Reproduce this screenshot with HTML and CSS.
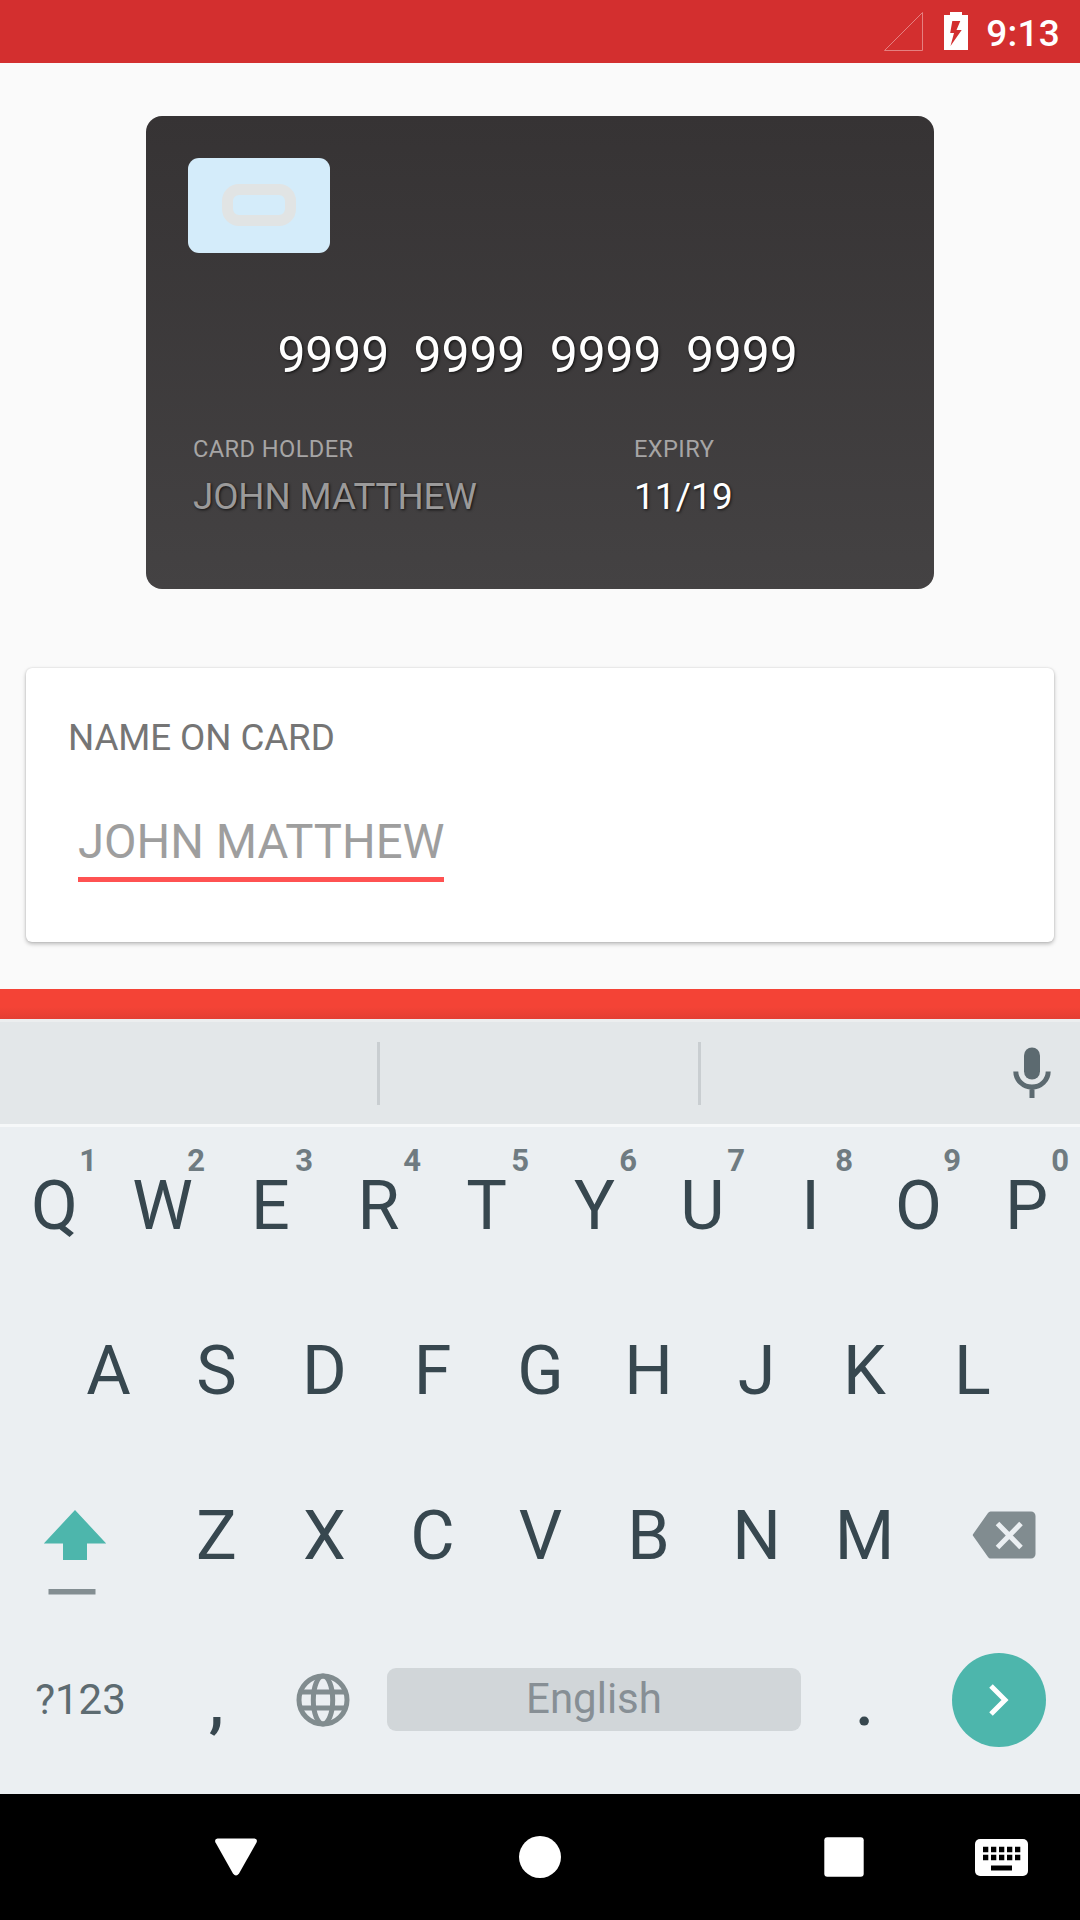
FILE: index.html
```html
<!DOCTYPE html>
<html lang="en">
<head>
<meta charset="utf-8">
<title>Card details</title>
<link rel="stylesheet" href="styles.css">
</head>
<body>
<header class="status-bar">
  <svg class="signal" width="40" height="40" viewBox="0 0 40 40"><path d="M1.500 38.500H39.500V0.500Z" fill="none" stroke="#e58080" stroke-width="1"/></svg>
  <svg class="battery" width="24" height="38" viewBox="0 0 24 38"><path fill="#fff" fill-rule="evenodd" d="M6 0H18V3H24V38H0V3H6ZM8.300 9L6.200 21H10L6.500 34L17.700 18H12.500L16.300 9Z"/></svg>
  <span class="clock">9:13</span>
</header>

<main class="content">
  <section class="bank-card">
    <div class="chip"><div class="chip-ring"></div></div>
    <div class="number">9999  9999  9999  9999</div>
    <div class="details">
      <div class="holder">
        <div class="label">CARD HOLDER</div>
        <div class="value value-hint">JOHN MATTHEW</div>
      </div>
      <div class="expiry">
        <div class="label">EXPIRY</div>
        <div class="value value-date">11/19</div>
      </div>
    </div>
  </section>

  <section class="form-card">
    <div class="field-label">NAME ON CARD</div>
    <div class="field">JOHN MATTHEW</div>
  </section>
</main>

<div class="action-bar"></div>

<section class="keyboard">
  <div class="suggestions">
    <span class="divider"></span>
    <span class="divider divider-second"></span>
    <svg class="mic" width="38" height="52" viewBox="0 0 38 52"><rect x="11" y="0.500" width="16" height="32" rx="8" fill="#5c6a70"/><path d="M2.800 24.500A16.200 15.500 0 0 0 35.200 24.500M19 40.500V51" fill="none" stroke="#5c6a70" stroke-width="5"/></svg>
  </div>
  <div class="keys">
    <div class="row row-first">
      <span class="key">Q<sup class="hint">1</sup></span>
      <span class="key">W<sup class="hint">2</sup></span>
      <span class="key">E<sup class="hint">3</sup></span>
      <span class="key">R<sup class="hint">4</sup></span>
      <span class="key">T<sup class="hint">5</sup></span>
      <span class="key">Y<sup class="hint">6</sup></span>
      <span class="key">U<sup class="hint">7</sup></span>
      <span class="key">I<sup class="hint">8</sup></span>
      <span class="key">O<sup class="hint">9</sup></span>
      <span class="key">P<sup class="hint">0</sup></span>
    </div>
    <div class="row">
      <span class="key">A</span><span class="key">S</span><span class="key">D</span><span class="key">F</span><span class="key">G</span><span class="key">H</span><span class="key">J</span><span class="key">K</span><span class="key">L</span>
    </div>
    <div class="row">
      <span class="key key-shift"><svg width="64" height="86" viewBox="0 0 64 86"><path d="M32 1L63.200 34.500H44V51H20V34.500H0.800Z" fill="#4db6ac"/><path d="M5.500 80H52.500V85.500H5.500Z" fill="#838e92"/></svg></span>
      <span class="key">Z</span><span class="key">X</span><span class="key">C</span><span class="key">V</span><span class="key">B</span><span class="key">N</span><span class="key">M</span>
      <span class="key key-delete"><svg width="64" height="48" viewBox="0 0 64 48"><path d="M18.500 0.500H59A4.500 4.500 0 0 1 63.500 5V43A4.500 4.500 0 0 1 59 47.500H18.500Q17 47.500 16 46L1 24.800Q0.500 24 1 23.200L16 2Q17 0.500 18.500 0.500Z" fill="#818c90"/><path d="M25.500 12.500L49 36.500M49 12.500L25.500 36.500" stroke="#ebeff2" stroke-width="5"/></svg></span>
    </div>
    <div class="row row-last">
      <span class="key key-symbols">?123</span>
      <span class="key key-comma">,</span>
      <span class="key key-language"><svg width="54" height="54" viewBox="0 0 54 54" fill="none" stroke="#818c8f" stroke-width="5"><circle cx="27" cy="27" r="24"/><ellipse cx="27" cy="27" rx="9.700" ry="24"/><path d="M5 19H49M5 35H49"/></svg></span>
      <span class="space">English</span>
      <span class="key key-period">.</span>
      <span class="key key-next"><svg width="20" height="32" viewBox="0 0 20 32"><path d="M2 2L16 16L2 30" fill="none" stroke="#fff" stroke-width="5"/></svg></span>
    </div>
  </div>
</section>

<nav class="nav-bar">
  <span class="nav-item"><svg width="42" height="38" viewBox="0 0 42 38"><path d="M2.500 0.500H39.500Q43 1 41.500 4.500L24 35.500Q21 39.500 18 35.500L0.500 4.500Q-1 1 2.500 0.500Z" fill="#fff"/></svg></span>
  <span class="nav-item"><svg width="42" height="42" viewBox="0 0 42 42"><circle cx="21" cy="21" r="21" fill="#fff"/></svg></span>
  <span class="nav-item"><svg width="40" height="40" viewBox="0 0 40 40"><rect x="0.300" y="0.300" width="39.400" height="39.400" rx="3" fill="#fff"/></svg></span>
  <span class="nav-item"><svg width="53" height="37" viewBox="0 0 53 37"><rect width="53" height="37" rx="5" fill="#fff"/><path d="M8 10.500H45.500M8 18.500H45.500" stroke="#000" stroke-width="5.300" stroke-dasharray="5.300 2.700"/><path d="M16 26.500H37V31.500H16Z"/></svg></span>
</nav>
</body>
</html>
```
FILE: styles.css
```css
* { box-sizing: border-box; }

body {
  margin: 0;
  width: 1080px;
  height: 1920px;
  display: flex;
  flex-direction: column;
  overflow: hidden;
  background: #fafafa;
  font-family: Roboto, "Liberation Sans", sans-serif;
}

svg { display: block; flex: none; }

/* Status bar */
.status-bar {
  height: 63px;
  display: flex;
  align-items: flex-start;
  justify-content: flex-end;
  padding-right: 20px;
  background: #d32f2f;
  color: #fff;
}
.signal { margin: 12px 21px 0 0; }
.battery { margin: 12px 18px 0 0; }
.clock {
  font-size: 37px;
  font-weight: 500;
  line-height: 67px;
  letter-spacing: 0.2px;
}

/* Page content */
.content {
  height: 926px;
  padding: 53px 26px 0;
  display: flex;
  flex-direction: column;
  align-items: center;
}
.bank-card {
  width: 788px;
  height: 473px;
  padding: 42px;
  border-radius: 16px;
  background: linear-gradient(#363334, #444243);
  color: #fff;
}
.chip {
  width: 142px;
  height: 95px;
  padding: 26px 34px;
  border-radius: 11px;
  background: #d4ecfa;
}
.chip-ring {
  width: 74px;
  height: 42px;
  border: 11px solid #e1e4e4;
  border-radius: 17px;
}
.number {
  margin-top: 72.5px;
  padding-right: 5px;
  font-size: 49.875px;
  line-height: 58px;
  letter-spacing: -0.11px;
  white-space: pre;
  text-align: center;
  text-shadow: 1px 1px 3px rgba(0, 0, 0, 0.75);
}
.details {
  display: flex;
  margin: 51.5px 0 0 5px;
}
.holder { width: 441px; }
.label {
  font-size: 23.625px;
  line-height: 28px;
  letter-spacing: 0.42px;
  color: #a6a5a5;
}
.value {
  margin-top: 12.2px;
  font-size: 36.75px;
  line-height: 44px;
  letter-spacing: -0.1px;
  text-shadow: 1px 1px 3px rgba(0, 0, 0, 0.75);
}
.value-hint { color: #9b9a9a; }
.value-date { letter-spacing: 0.2px; }

.form-card {
  width: 1028px;
  height: 274px;
  margin-top: 79px;
  padding: 48px 42px 0;
  border-radius: 6px;
  background: #fff;
  box-shadow: 0 2px 4px rgba(0, 0, 0, 0.26), 0 0 2px rgba(0, 0, 0, 0.14);
}
.field-label {
  font-size: 36.75px;
  line-height: 44px;
  letter-spacing: -0.1px;
  color: #757575;
}
.field {
  width: 366px;
  height: 68px;
  margin: 54px 0 0 10px;
  border-bottom: 5px solid #ff5252;
  font-size: 47.25px;
  line-height: 56px;
  white-space: nowrap;
  color: #9e9e9e;
}

.action-bar {
  height: 30px;
  background: linear-gradient(#f44336 60%, #e33f33);
}

/* Keyboard */
.keyboard { height: 775px; color: #37474f; }
.suggestions {
  height: 105px;
  display: flex;
  align-items: flex-start;
  border-top: 3px solid #eceeef;
  padding-left: 377px;
  background: #e3e7e9;
}
.divider {
  width: 3px;
  height: 63px;
  margin-top: 20px;
  background: #c9ced1;
}
.divider-second { margin-left: 318px; }
.mic { margin: 25px 0 0 312px; }
.keys {
  height: 670px;
  border-top: 3px solid #f6f8f9;
  background: #ebeff2;
}
.row {
  height: 165px;
  display: flex;
  align-items: center;
  justify-content: center;
}
.row-first { height: 161px; padding-bottom: 4px; }
.key {
  position: relative;
  width: 108px;
  display: flex;
  justify-content: center;
  padding-left: 1px;
  font-size: 68.25px;
  line-height: 80px;
}
.hint {
  position: absolute;
  top: -23px;
  right: 11px;
  font-size: 31px;
  font-weight: 700;
  line-height: 36px;
  color: #6f7b81;
}
.key-shift { width: 162px; padding: 32px 12px 0 0; }
.key-delete { width: 162px; padding: 0 0 2px 9px; }
.row-last { height: 163px; }
.key-symbols {
  width: 162px;
  padding: 1px 1px 0 0;
  font-size: 42px;
}
.key-symbols { color: #5d6b71; }
.key-comma, .key-period { padding-top: 4px; font-weight: 500; }
.key-language { padding: 0 2px 0 0; }
.space {
  width: 414px;
  height: 63px;
  margin: 0 9px;
  border-radius: 9px;
  background: #d1d6d9;
  color: #878f95;
  font-size: 42px;
  line-height: 61px;
  text-align: center;
}
.key-next {
  width: 94px;
  height: 94px;
  margin: 0 34px;
  padding: 0;
  align-items: center;
  border-radius: 50%;
  background: #4db6ac;
}

/* System navigation */
.nav-bar {
  height: 126px;
  display: grid;
  grid-template-columns: 304px 304px 304px 11px;
  align-items: center;
  padding-left: 84px;
  background: #000;
}
.nav-item { display: flex; justify-content: center; }
```
